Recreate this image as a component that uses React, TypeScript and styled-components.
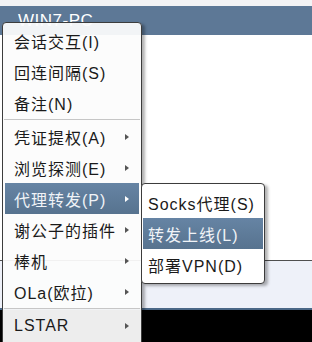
import { createGlobalStyle, styled } from "styled-components";

const GlobalStyle = createGlobalStyle`
  html, body {
    margin: 0;
    padding: 0;
    overflow: hidden;
    background: #ffffff;
  }
  * {
    box-sizing: border-box;
  }
`;

const Screen = styled.div`
  position: relative;
  width: 312px;
  height: 342px;
  overflow: hidden;
  display: flex;
  flex-direction: column;
  font-family: "Liberation Sans", "Noto Sans CJK SC", sans-serif;
`;

const TopStrip = styled.div`
  height: 6px;
  background-color: #f3f3f5;
`;

const Header = styled.div`
  height: 29px;
  display: flex;
  align-items: center;
  padding-left: 18px;
  background-color: #5d7896;
  color: #ffffff;
  font-size: 17px;
  letter-spacing: 0.5px;
`;

const Content = styled.div`
  height: 225px;
  background-color: #ffffff;
`;

const StatusPane = styled.div`
  height: 48px;
  background-color: #eef1f9;
  border-top: 1px solid #4f4f4f;
`;

const Divider = styled.div`
  height: 2px;
  background-color: #4a6787;
`;

const Console = styled.div`
  flex: 1;
  background-color: #000000;
`;

const Menu = styled.div<{ $width: number }>`
  position: absolute;
  width: ${(p) => p.$width}px;
  padding: 2px 0;
  border: 1px solid #3c3c3c;
  border-radius: 4px;
  background-color: rgba(252, 252, 252, 0.94);
  box-shadow: 3px 2px 3px rgba(0, 0, 0, 0.3);
`;

const MainMenu = styled(Menu)`
  left: 2px;
  top: 22px;
`;

const SubMenu = styled(Menu)`
  left: calc(100% + 2px);
  top: 0;
  padding: 3px 0;
  background-color: #ffffff;
`;

const Item = styled.div<{ $active?: boolean; $pad: number }>`
  position: relative;
  height: 31px;
  margin: 0 ${(p) => (p.$pad === 9 ? 2 : 1)}px;
  padding: 0 10px 0 ${(p) => p.$pad}px;
  display: flex;
  align-items: center;
  justify-content: space-between;
  font-size: 16px;
  letter-spacing: 1px;
  white-space: nowrap;
  color: ${(p) => (p.$active ? "#f0f3f7" : "#1a1a1a")};
  background: ${(p) =>
    p.$active ? "linear-gradient(#6684a4, #57738f)" : "transparent"};
`;

const Arrow = styled.span<{ $active?: boolean }>`
  width: 0;
  height: 0;
  border-top: 3.5px solid transparent;
  border-bottom: 3.5px solid transparent;
  border-left: 4px solid ${(p) => (p.$active ? "#ffffff" : "#555555")};
`;

const Separator = styled.div`
  height: 1px;
  margin: 1px 1px;
  background-color: #c6c6c6;
`;

type Entry = { label: string; sub?: boolean } | "sep";

const mainItems: Entry[] = [
  { label: "会话交互(I)" },
  { label: "回连间隔(S)" },
  { label: "备注(N)" },
  "sep",
  { label: "凭证提权(A)", sub: true },
  { label: "浏览探测(E)", sub: true },
  { label: "代理转发(P)", sub: true },
  { label: "谢公子的插件", sub: true },
  { label: "棒机", sub: true },
  { label: "OLa(欧拉)", sub: true },
  "sep",
  { label: "LSTAR", sub: true },
  "sep",
];

const subItems = ["Socks代理(S)", "转发上线(L)", "部署VPN(D)"];

export default function App() {
  return (
    <>
      <GlobalStyle />
      <Screen>
        <TopStrip />
        <Header>WIN7-PC</Header>
        <Content />
        <StatusPane />
        <Divider />
        <Console />

        <MainMenu $width={140}>
          {mainItems.map((entry, i) => {
            if (entry === "sep") return <Separator key={i} />;
            const active = entry.label === "代理转发(P)";
            return (
              <Item key={i} $active={active} $pad={9}>
                <span>{entry.label}</span>
                {entry.sub && <Arrow $active={active} />}
                {active && (
                  <SubMenu $width={124}>
                    {subItems.map((label) => (
                      <Item
                        key={label}
                        $active={label === "转发上线(L)"}
                        $pad={5}
                      >
                        <span>{label}</span>
                      </Item>
                    ))}
                  </SubMenu>
                )}
              </Item>
            );
          })}
        </MainMenu>
      </Screen>
    </>
  );
}
